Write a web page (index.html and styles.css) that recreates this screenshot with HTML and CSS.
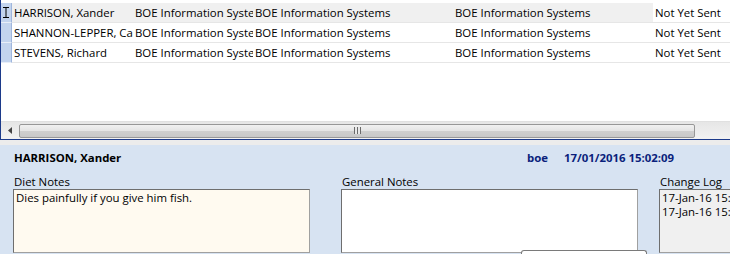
FILE: index.html
```html
<!DOCTYPE html>
<html>
  <head>
    <title>Attendees</title>
    <meta charset="utf-8">
    <link rel="stylesheet" href="styles.css">
  </head>
  <body>
    <div class="gridpanel">
      <div class="rows">
        <div class="row current">
          <div class="rowhead"><svg width="8" height="11" viewBox="0 0 8 11"><path d="M1 0.5h6M1 10.5h6M4 0.5v10" stroke="#000" stroke-width="1" fill="none"/></svg></div>
          <div class="cell c1">HARRISON, Xander</div>
          <div class="cell c2">BOE Information Systems</div>
          <div class="cell c3">BOE Information Systems</div>
          <div class="cell c4">BOE Information Systems</div>
          <div class="cell c5">Not Yet Sent</div>
        </div>
        <div class="row">
          <div class="rowhead"></div>
          <div class="cell c1">SHANNON-LEPPER, Carol</div>
          <div class="cell c2">BOE Information Systems</div>
          <div class="cell c3">BOE Information Systems</div>
          <div class="cell c4">BOE Information Systems</div>
          <div class="cell c5">Not Yet Sent</div>
        </div>
        <div class="row">
          <div class="rowhead"></div>
          <div class="cell c1">STEVENS, Richard</div>
          <div class="cell c2">BOE Information Systems</div>
          <div class="cell c3">BOE Information Systems</div>
          <div class="cell c4">BOE Information Systems</div>
          <div class="cell c5">Not Yet Sent</div>
        </div>
      </div>
      <div class="hscroll">
        <div class="arrow"><svg width="5" height="7" viewBox="0 0 5 7"><path d="M4 0L0 3.5L4 7z" fill="#444"/></svg></div>
        <div class="thumb"><span class="grip"></span></div>
      </div>
    </div>

    <div class="detail">
      <div class="headline">
        <span class="person">HARRISON, Xander</span>
        <span class="user">boe</span>
        <span class="stamp">17/01/2016 15:02:09</span>
      </div>
      <div class="notes">
        <div class="field diet">
          <label>Diet Notes</label>
          <div class="box cream">Dies painfully if you give him fish.</div>
        </div>
        <div class="field general">
          <label>General Notes</label>
          <div class="box"></div>
        </div>
        <div class="field log">
          <label>Change Log</label>
          <div class="box grey">17-Jan-16 15:02:09 boe<br>17-Jan-16 15:01:44 boe</div>
        </div>
      </div>
      <div class="popup"></div>
    </div>
  </body>
</html>
```

FILE: styles.css
```css
body {
  margin: 0;
  width: 730px;
  height: 254px;
  overflow: hidden;
  font-family: "Open Sans", "Noto Sans", Arial, sans-serif;
  font-size: 11.4px;
  color: #000;
  background-color: #d7e3f2;
}
.gridpanel {
  height: 139px;
  background-color: #fff;
  border-left: 1px solid #1c3a8a;
  border-bottom: 1px solid #1c3a8a;
  display: flex;
  flex-direction: column;
}
.rows {
  flex: 1;
  padding-top: 3px;
}
.row {
  display: flex;
  height: 19px;
  border-bottom: 1px solid #e6e6e6;
}
.row.current {
  background-color: #f0f0f0;
}
.rowhead {
  width: 10px;
  flex: none;
  background-color: #c3d4ee;
  border-right: 1px solid #9fb6dc;
  border-bottom: 1px solid #e8eef8;
  margin-bottom: -1px;
  display: flex;
  align-items: center;
  justify-content: center;
}
.cell {
  flex: none;
  padding: 0 0 0 2px;
  line-height: 19px;
  white-space: nowrap;
  overflow: hidden;
  box-sizing: border-box;
}
.c1 { width: 121px; }
.c2 { width: 120px; }
.c3 { width: 200px; }
.c4 { width: 200px; }
.c5 { flex: 1; background-color: #fff; }
.hscroll {
  height: 17px;
  background: linear-gradient(#e6e6e6, #f2f2f2);
  border-top: 1px solid #e0e0e0;
  display: flex;
  align-items: center;
}
.arrow {
  width: 18px;
  display: flex;
  justify-content: center;
}
.thumb {
  width: 676px;
  height: 14px;
  box-sizing: border-box;
  border: 1px solid #979797;
  border-radius: 2px;
  background: linear-gradient(#f1f1f1 0%, #e4e4e4 50%, #cfcfcf 51%, #c8c8c8 100%);
  display: flex;
  align-items: center;
  justify-content: center;
}
.grip {
  width: 7px;
  height: 7px;
  background: repeating-linear-gradient(90deg, #6a6a6a 0 1px, #e8e8e8 1px 3px);
}
.detail {
  position: relative;
  border-top: 5px solid #ececec;
  padding: 4px 0 0 14px;
}
.headline {
  display: flex;
  font-weight: bold;
  height: 18px;
  line-height: 18px;
}
.person {
  width: 513px;
}
.user, .stamp {
  color: #0b1f7c;
}
.stamp {
  margin-left: 16px;
}
.notes {
  display: flex;
  margin-top: 7px;
}
.field {
  flex: none;
}
.field label {
  display: block;
  height: 15px;
  line-height: 15px;
  padding-left: 1px;
}
.box {
  height: 64px;
  box-sizing: border-box;
  border: 1px solid #a0a0a0;
  border-top-color: #6e6e6e;
  border-left-color: #6e6e6e;
  background-color: #fff;
  padding: 1px 2px;
  line-height: 14px;
  white-space: nowrap;
  overflow: hidden;
}
.diet {
  width: 297px;
  margin-left: -1px;
}
.general {
  width: 297px;
  margin-left: 31px;
}
.log {
  margin-left: 21px;
  flex: 1;
  min-width: 0;
}
.cream {
  background-color: #fffaf0;
}
.grey {
  background-color: #f0f0f0;
  border-right: none;
}
.popup {
  position: absolute;
  left: 521px;
  top: 105px;
  width: 126px;
  height: 4px;
  box-sizing: border-box;
  border: 1px solid #7a7a7a;
  border-bottom: none;
  border-radius: 3px 3px 0 0;
  background-color: #fff;
}
```
